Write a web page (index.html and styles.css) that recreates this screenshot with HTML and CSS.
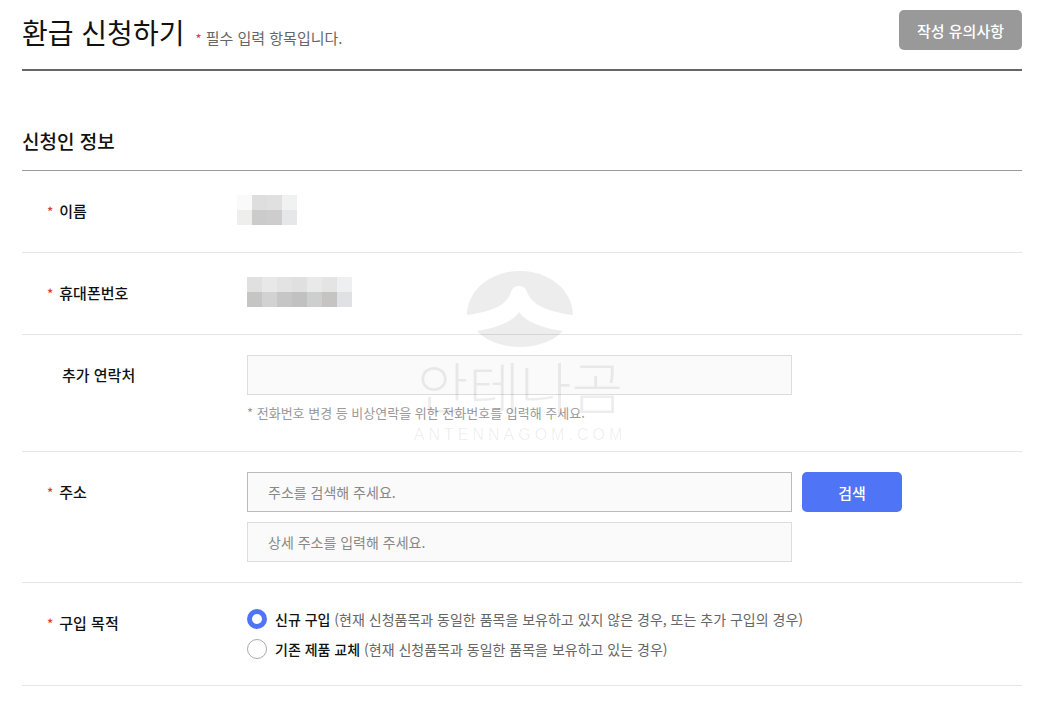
FILE: index.html
```html
<!DOCTYPE html>
<html lang="ko">
<head>
<meta charset="utf-8">
<title>환급 신청하기</title>
<link rel="stylesheet" href="styles.css">
</head>
<body>
<main class="page">
  <header class="page-head">
    <div class="page-title">
      <h1>환급 신청하기</h1>
      <p class="required-note"><span class="star">*</span> 필수 입력 항목입니다.</p>
    </div>
    <button class="notice-btn" type="button">작성 유의사항</button>
  </header>

  <h2 class="section-title">신청인 정보</h2>

  <div class="row">
    <div class="label"><span class="star">*</span>이름</div>
    <div class="field">
      <svg class="mosaic mosaic-name" width="60" height="30" viewBox="0 0 4 2" shape-rendering="crispEdges" aria-hidden="true">
        <rect x="0" y="0" width="1" height="1" fill="#fafafa"/><rect x="1" y="0" width="1" height="1" fill="#dedede"/><rect x="2" y="0" width="1" height="1" fill="#e0e0e0"/><rect x="3" y="0" width="1" height="1" fill="#f0f1f1"/>
        <rect x="0" y="1" width="1" height="1" fill="#eeeeed"/><rect x="1" y="1" width="1" height="1" fill="#cbcbcb"/><rect x="2" y="1" width="1" height="1" fill="#cdcdcd"/><rect x="3" y="1" width="1" height="1" fill="#e6e7e9"/>
      </svg>
    </div>
  </div>

  <div class="row">
    <div class="label"><span class="star">*</span>휴대폰번호</div>
    <div class="field">
      <svg class="mosaic" width="105" height="30" viewBox="0 0 7 2" shape-rendering="crispEdges" aria-hidden="true">
        <rect x="0" y="0" width="1" height="1" fill="#e0e0e0"/><rect x="1" y="0" width="1" height="1" fill="#e8e8e8"/><rect x="2" y="0" width="1" height="1" fill="#e3e3e3"/><rect x="3" y="0" width="1" height="1" fill="#e1e0e0"/><rect x="4" y="0" width="1" height="1" fill="#e9e9e9"/><rect x="5" y="0" width="1" height="1" fill="#e5e4e4"/><rect x="6" y="0" width="1" height="1" fill="#eeeff1"/>
        <rect x="0" y="1" width="1" height="1" fill="#c5c5c4"/><rect x="1" y="1" width="1" height="1" fill="#d3d2d2"/><rect x="2" y="1" width="1" height="1" fill="#c6c6c6"/><rect x="3" y="1" width="1" height="1" fill="#c2c1c1"/><rect x="4" y="1" width="1" height="1" fill="#cdcfce"/><rect x="5" y="1" width="1" height="1" fill="#c5c4c3"/><rect x="6" y="1" width="1" height="1" fill="#e0e1e4"/>
      </svg>
    </div>
  </div>

  <div class="row">
    <div class="label label-plain">추가 연락처</div>
    <div class="field">
      <input class="input" type="text">
      <p class="help">* 전화번호 변경 등 비상연락을 위한 전화번호를 입력해 주세요.</p>
    </div>
  </div>

  <div class="row">
    <div class="label"><span class="star">*</span>주소</div>
    <div class="field field-stack">
      <div class="address-line">
        <input class="input input-strong" type="text" placeholder="주소를 검색해 주세요.">
        <button class="search-btn" type="button">검색</button>
      </div>
      <input class="input" type="text" placeholder="상세 주소를 입력해 주세요.">
    </div>
  </div>

  <div class="row">
    <div class="label"><span class="star">*</span>구입 목적</div>
    <div class="field radios">
      <div class="radio-line">
        <span class="radio radio-on"></span>
        <span class="radio-text"><b>신규 구입</b> (현재 신청품목과 동일한 품목을 보유하고 있지 않은 경우, 또는 추가 구입의 경우)</span>
      </div>
      <div class="radio-line">
        <span class="radio"></span>
        <span class="radio-text"><b>기존 제품 교체</b> (현재 신청품목과 동일한 품목을 보유하고 있는 경우)</span>
      </div>
    </div>
  </div>

  <div class="watermark" aria-hidden="true">
    <svg class="wm-logo" width="106" height="76" viewBox="465 271 106 76">
      <path d="M465 315C465 290 489 271 518 271C547 271 571 290 571 315C548 312 530 306 525 292C523 284 511 284 509 292C505 306 488 312 465 315Z"/>
      <path d="M475 331C495 328 510 322 517 312C524 322 540 328 561 331C552 341 535 347 518 347C500 347 484 341 475 331Z"/>
    </svg>
    <div class="wm-name">안테나곰</div>
    <div class="wm-url">ANTENNAGOM.COM</div>
  </div>
</main>
</body>
</html>
```
FILE: styles.css
```css
* { box-sizing: border-box; }
html, body { margin: 0; padding: 0; background: #fff; }
body {
  font-family: "Noto Sans CJK KR", "Noto Sans", sans-serif;
  color: #111;
  overflow: hidden;
}
.page {
  position: relative;
  width: 1000px;
  margin-left: 22px;
  height: 716px;
}
.page-head {
  display: flex;
  justify-content: space-between;
  align-items: flex-start;
  height: 71px;
  padding-top: 10px;
  border-bottom: 2px solid #666;
}
.page-title { display: flex; align-items: baseline; gap: 11px; height: 40px; }
h1 {
  margin: 0;
  font-size: 28px;
  font-weight: 400;
  line-height: 44px;
  color: #111;
}
.required-note { margin: 0; font-size: 15px; color: #666; }
.star { color: #d0413a; font-size: 13px; }
.notice-btn {
  width: 123px;
  height: 40px;
  border: 0;
  border-radius: 5px;
  background: #999;
  color: #fff;
  font: 500 15px "Noto Sans CJK KR", sans-serif;
}
.section-title {
  margin: 0;
  height: 100px;
  padding-top: 50px;
  font-size: 19px;
  font-weight: 500;
  line-height: 40px;
  border-bottom: 1px solid #999;
}
.row {
  display: flex;
  padding: 20px 0;
  border-bottom: 1px solid #e5e5e5;
}
.label {
  flex: 0 0 225px;
  padding-left: 25px;
  font-size: 15px;
  line-height: 40px;
  font-weight: 500;
  color: #111;
}
.label .star { margin-right: 6px; }
.label-plain { padding-left: 40px; }
.field { flex: 0 0 655px; }
.field-stack { display: flex; flex-direction: column; gap: 10px; }
.mosaic { display: block; margin-top: 4px; margin-bottom: 6px; }
.mosaic-name { margin-left: -10px; }
.input {
  display: block;
  width: 545px;
  height: 40px;
  padding: 0 20px;
  background: #fafafa;
  border: 1px solid #ddd;
  border-radius: 0;
  font: 400 14px "Noto Sans CJK KR", sans-serif;
  outline: none;
}
.input::placeholder { color: #888; opacity: 1; }
.input-strong { border-color: #bbb; }
.help {
  margin: 0;
  height: 36px;
  padding-top: 8px;
  font-size: 13px;
  line-height: 20px;
  color: #999;
}
.address-line { display: flex; gap: 10px; }
.search-btn {
  width: 100px;
  height: 40px;
  border: 0;
  border-radius: 5px;
  background: #4f74f5;
  color: #fff;
  font: 500 15px "Noto Sans CJK KR", sans-serif;
}
.radios { padding: 1px 0; }
.radio-line { display: flex; align-items: center; height: 30px; }
.radio {
  flex: none;
  width: 20px;
  height: 20px;
  margin-right: 8px;
  border: 1px solid #aaa;
  border-radius: 50%;
  background: #fff;
}
.radio-on { border: 5px solid #4f74f5; }
.radio-text { font-size: 14px; color: #666; }
.radio-text b { font-weight: 500; color: #111; }
.watermark {
  position: absolute;
  left: 384px;
  top: 271px;
  width: 228px;
  display: flex;
  flex-direction: column;
  align-items: center;
  pointer-events: none;
}
.wm-logo { display: block; margin-right: 0; }
.wm-logo path { fill: rgba(0, 0, 0, 0.07); }
.wm-name {
  margin-top: 0;
  font-size: 56px;
  font-weight: 300;
  line-height: 76px;
  white-space: nowrap;
  color: rgba(0, 0, 0, 0.07);
}
.wm-url {
  margin-top: 2px;
  font: 400 16px/20px "Liberation Sans", sans-serif;
  letter-spacing: 4px;
  white-space: nowrap;
  color: rgba(0, 0, 0, 0.07);
}
```
